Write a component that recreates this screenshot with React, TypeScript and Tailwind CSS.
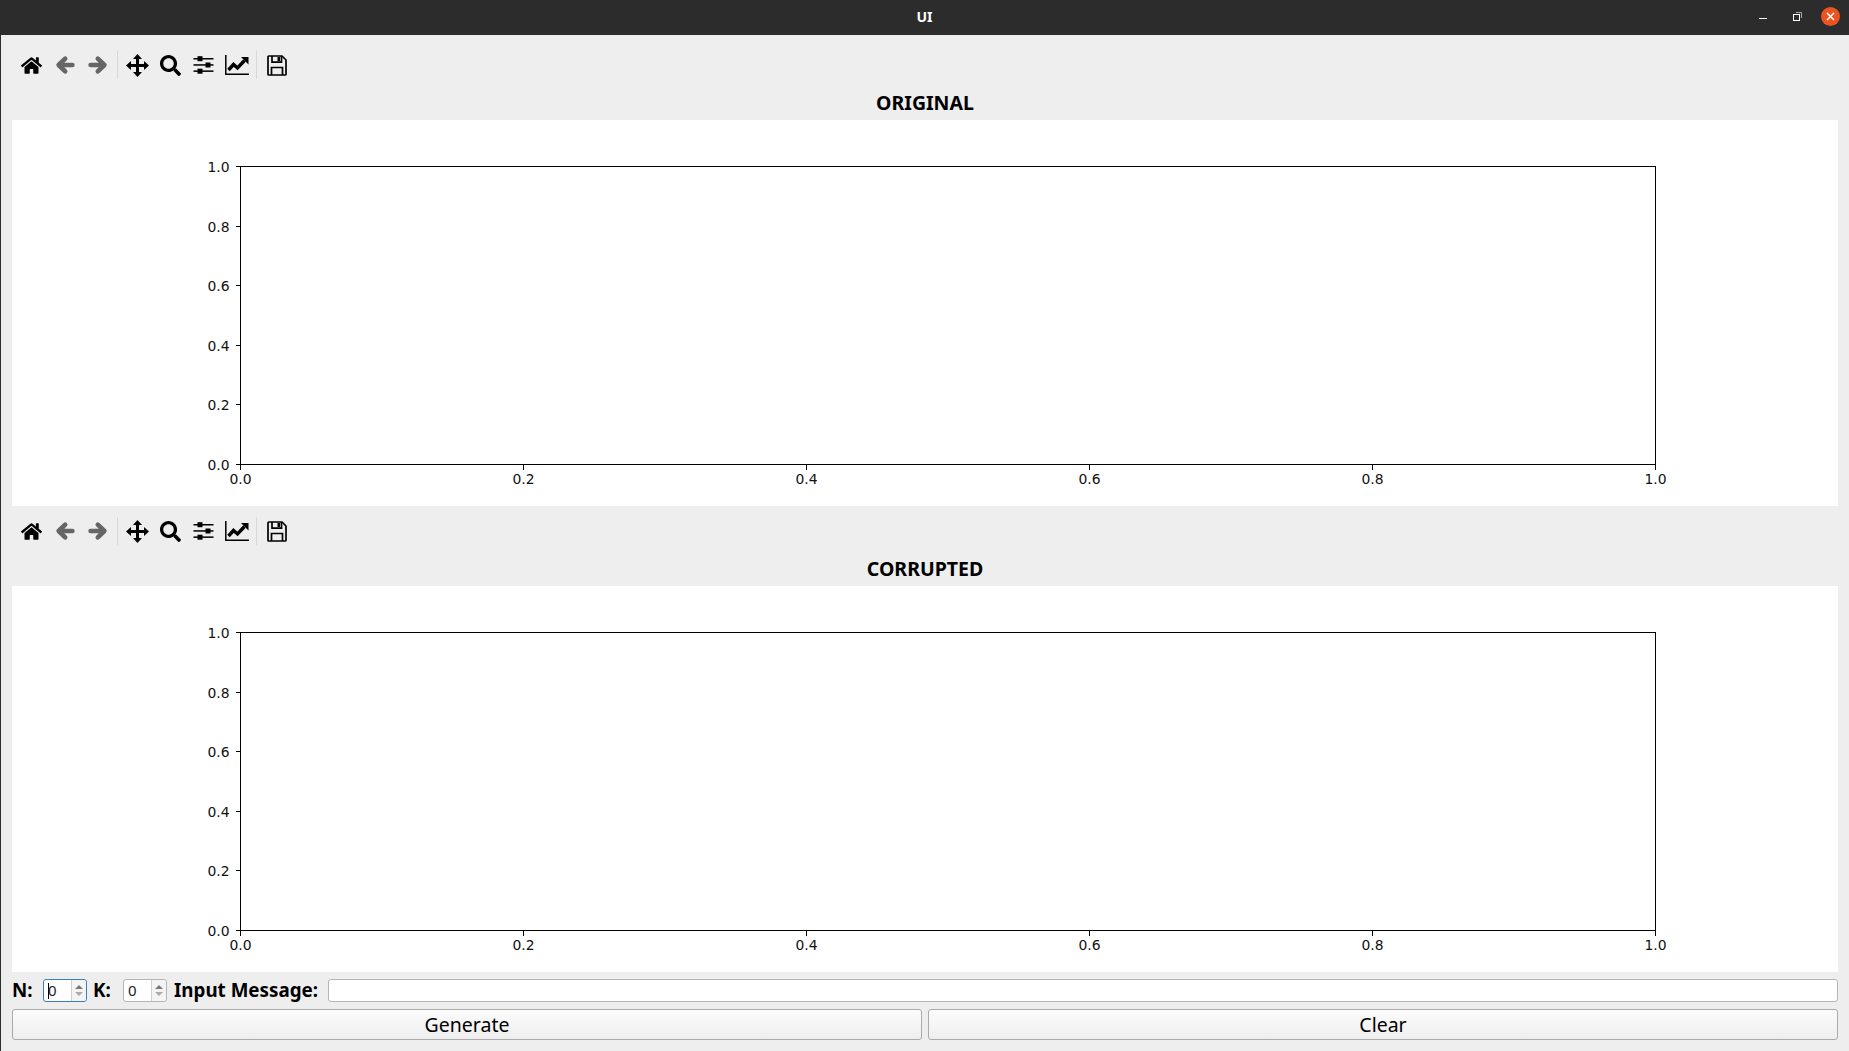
import React from 'react';
import { FaHome, FaSearch } from 'react-icons/fa';

const UI_FONT = "font-['Noto_Sans',sans-serif]";
const TICKS = ['0.0', '0.2', '0.4', '0.6', '0.8', '1.0'];

const BackIcon = () => (
  <svg width="20" height="20" viewBox="0 0 20 20" fill="none" stroke="#666666" strokeWidth="4.6" strokeLinejoin="round" strokeLinecap="round">
    <path d="M17.4 10H4M10.2 3.6L3.6 10L10.2 16.4" />
  </svg>
);

const ForwardIcon = () => (
  <svg width="20" height="20" viewBox="0 0 20 20" fill="none" stroke="#666666" strokeWidth="4.6" strokeLinejoin="round" strokeLinecap="round">
    <path d="M2.6 10H16M9.8 3.6L16.4 10L9.8 16.4" />
  </svg>
);

const MoveIcon = () => (
  <svg width="23" height="23" viewBox="0 0 23 23" fill="black">
    <rect x="3" y="10" width="17" height="3" />
    <rect x="10" y="3" width="3" height="17" />
    <path d="M11.5 0L16 5H7Z" />
    <path d="M11.5 23L16 18H7Z" />
    <path d="M0 11.5L5 7V16Z" />
    <path d="M23 11.5L18 7V16Z" />
  </svg>
);

const SlidersIcon = () => (
  <svg width="21" height="20" viewBox="0 0 21 20" fill="black">
    <rect x="0.5" y="3" width="20" height="1.5" />
    <rect x="0.5" y="9.2" width="20" height="1.5" />
    <rect x="0.5" y="15.4" width="20" height="1.5" />
    <rect x="4.5" y="1.2" width="5" height="5" />
    <rect x="12.5" y="7.5" width="5" height="5" />
    <rect x="4.5" y="13.7" width="5" height="5" />
  </svg>
);

const ChartIcon = () => (
  <svg width="24" height="20" viewBox="0 0 24 20" fill="none">
    <path d="M0.8 0V19.2H24" stroke="black" strokeWidth="1.5" />
    <path d="M3.5 15L8.5 9.5L12.5 13L19.5 5.5" stroke="black" strokeWidth="3.4" />
    <path d="M16 2H23.5V9.5Z" fill="black" />
  </svg>
);

const SaveIcon = () => (
  <svg width="20" height="21" viewBox="0 0 20 21" fill="none" stroke="black" strokeWidth="1.7">
    <path d="M1.5 1H15L19 5V19.2Q19 20 18 20H2Q1 20 1 19.2V2Q1 1 2 1Z" />
    <path d="M5 1V7.2H14.5V1" />
    <path d="M4.5 20V12.5H15.5V20" />
    <rect x="10.5" y="2" width="2.5" height="4" fill="black" stroke="none" />
  </svg>
);

const ToolButton = ({ children }: { children: React.ReactNode }) => (
  <div className="w-[33px] h-[33px] flex items-center justify-center">{children}</div>
);

const Separator = () => (
  <div className="w-[7px] h-[28px] flex justify-center">
    <div className="w-px h-full bg-[#d8d8d8]" />
  </div>
);

const Toolbar = () => (
  <div className="h-[50px] pl-[3px] flex items-center">
    <ToolButton><FaHome size={21} color="black" /></ToolButton>
    <ToolButton><BackIcon /></ToolButton>
    <ToolButton><ForwardIcon /></ToolButton>
    <Separator />
    <ToolButton><MoveIcon /></ToolButton>
    <ToolButton><FaSearch size={21} color="black" /></ToolButton>
    <ToolButton><SlidersIcon /></ToolButton>
    <ToolButton><ChartIcon /></ToolButton>
    <Separator />
    <ToolButton><SaveIcon /></ToolButton>
  </div>
);

const Plot = () => (
  <svg width="1826" height="386" className="block bg-white">
    <rect x="228.5" y="46.5" width="1415" height="298" fill="none" stroke="black" />
    {TICKS.map((t, i) => {
      const y = Math.round(344 - i * 59.6) + 0.5;
      return (
        <g key={t}>
          <line x1="224" x2="228" y1={y} y2={y} stroke="black" />
          <text x="217.5" y={y + 5} textAnchor="end" fontFamily="DejaVu Sans" fontSize="13.9" fill="#111">{t}</text>
        </g>
      );
    })}
    {TICKS.map((t, i) => {
      const x = Math.round(228 + i * 283) + 0.5;
      return (
        <g key={t}>
          <line x1={x} x2={x} y1="345" y2="350" stroke="black" />
          <text x={x} y="364" textAnchor="middle" fontFamily="DejaVu Sans" fontSize="13.9" fill="#111">{t}</text>
        </g>
      );
    })}
  </svg>
);

const PlotSection = ({ title }: { title: string }) => (
  <section>
    <Toolbar />
    <h2 className="h-[30px] pb-[4px] flex items-center justify-center text-[19.5px] font-bold text-black">{title}</h2>
    <Plot />
  </section>
);

const SpinBox = ({ focused }: { focused?: boolean }) => (
  <div className={`w-[44px] h-[23px] flex bg-white rounded-[3px] border ${focused ? 'border-[#3d7fb5]' : 'border-[#b5b5b5]'}`}>
    <div className="flex-1 flex items-center pl-[4px] text-[15px] leading-none font-normal text-[#222]">
      {focused && <span className="w-px h-[16px] bg-black -mr-px" />}
      0
    </div>
    <div className="w-[15px] flex flex-col items-center justify-center gap-[3px] border-l border-[#d0d0d0] bg-[#f4f4f4] rounded-r-[3px]">
      <span className="w-0 h-0 border-x-[4px] border-x-transparent border-b-[4px] border-b-[#777]" />
      <span className="w-0 h-0 border-x-[4px] border-x-transparent border-t-[4px] border-t-[#aaa]" />
    </div>
  </div>
);

const PushButton = ({ label }: { label: string }) => (
  <button className="flex-1 h-[31px] text-[19.5px] leading-none text-black rounded-[3px] border border-[#aaaaaa] bg-gradient-to-b from-[#fcfcfc] to-[#eeeeee]">
    {label}
  </button>
);

export default function App() {
  return (
    <div className={`w-[1849px] h-[1051px] overflow-hidden flex flex-col bg-[#eeeeee] ${UI_FONT}`}>
      <header className="h-[35px] shrink-0 pb-[2px] grid grid-cols-[1fr_auto_1fr] items-center bg-[#2c2c2c] text-white">
        <div />
        <span className="text-[14px] font-bold">UI</span>
        <div className="flex items-center justify-end pr-[9px]">
          <span className="w-[8px] h-px bg-white mt-[3px]" />
          <svg width="9" height="9" viewBox="0 0 9 9" fill="none" className="ml-[26px]">
            <rect x="0.5" y="2.5" width="6" height="6" stroke="white" />
            <path d="M3 0.5H8.5V6" stroke="#aaaaaa" />
          </svg>
          <span className="ml-[19px] w-[19px] h-[19px] rounded-full bg-[#e95420] flex items-center justify-center">
            <svg width="9" height="9" viewBox="0 0 9 9" stroke="white" strokeWidth="1.5">
              <path d="M1 1L8 8M8 1L1 8" />
            </svg>
          </span>
        </div>
      </header>

      <main className="flex-1 flex flex-col border-l border-[#2c2c2c] pt-[5px] pl-[11px] pr-[11px]">
        <PlotSection title="ORIGINAL" />
        <PlotSection title="CORRUPTED" />

        <div className="mt-[7px] h-[23px] flex items-center text-[18.8px] font-bold text-black">
          <span className="w-[31px]">N:</span>
          <SpinBox focused />
          <span className="w-[36px] pl-[6px]">K:</span>
          <SpinBox />
          <span className="ml-[7px] w-[154px] whitespace-nowrap">Input Message:</span>
          <input className="flex-1 h-[23px] bg-white rounded-[3px] border border-[#b5b5b5]" />
        </div>

        <div className="mt-[7px] flex gap-[6px]">
          <PushButton label="Generate" />
          <PushButton label="Clear" />
        </div>
      </main>
    </div>
  );
}
